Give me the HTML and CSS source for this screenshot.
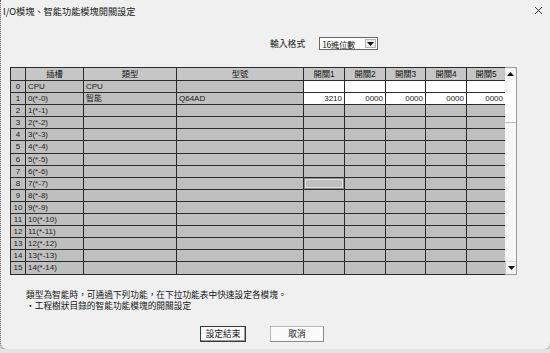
FILE: index.html
```html
<!DOCTYPE html>
<html>
<head>
  <meta charset="utf-8">
  <title>I/O模塊、智能功能模塊開關設定</title>
  <link rel="stylesheet" href="styles.css">
</head>
<body>
<div class="dialog">
  <div class="titlebar">
    <span class="title">I/O模塊、智能功能模塊開關設定</span>
    <svg class="close" width="9" height="9" viewBox="0 0 9 9"><path d="M1 1L8 8M8 1L1 8" stroke="#333" stroke-width="1"/></svg>
  </div>

  <div class="format">
    <span>輸入格式</span>
    <div class="select">
      <span class="select__text">16進位數</span>
      <span class="select__btn"><svg width="7" height="4" viewBox="0 0 7 4"><path d="M0 0H7L3.5 4Z" fill="#111"/></svg></span>
    </div>
  </div>

  <div class="table-area">
    <div class="grid">
      <div class="c h"></div><div class="c h">插槽</div><div class="c h">類型</div><div class="c h">型號</div><div class="c h">開關1</div><div class="c h">開關2</div><div class="c h">開關3</div><div class="c h">開關4</div><div class="c h">開關5</div>
      <div class="c n">0</div><div class="c">CPU</div><div class="c">CPU</div><div class="c"></div><div class="c w"></div><div class="c w"></div><div class="c w"></div><div class="c w"></div><div class="c w"></div>
      <div class="c n">1</div><div class="c">0(*-0)</div><div class="c">智能</div><div class="c">Q64AD</div><div class="c w r">3210</div><div class="c w r">0000</div><div class="c w r">0000</div><div class="c w r">0000</div><div class="c w r">0000</div>
      <div class="c n">2</div><div class="c">1(*-1)</div><div class="c"></div><div class="c"></div><div class="c"></div><div class="c"></div><div class="c"></div><div class="c"></div><div class="c"></div>
      <div class="c n">3</div><div class="c">2(*-2)</div><div class="c"></div><div class="c"></div><div class="c"></div><div class="c"></div><div class="c"></div><div class="c"></div><div class="c"></div>
      <div class="c n">4</div><div class="c">3(*-3)</div><div class="c"></div><div class="c"></div><div class="c"></div><div class="c"></div><div class="c"></div><div class="c"></div><div class="c"></div>
      <div class="c n">5</div><div class="c">4(*-4)</div><div class="c"></div><div class="c"></div><div class="c"></div><div class="c"></div><div class="c"></div><div class="c"></div><div class="c"></div>
      <div class="c n">6</div><div class="c">5(*-5)</div><div class="c"></div><div class="c"></div><div class="c"></div><div class="c"></div><div class="c"></div><div class="c"></div><div class="c"></div>
      <div class="c n">7</div><div class="c">6(*-6)</div><div class="c"></div><div class="c"></div><div class="c"></div><div class="c"></div><div class="c"></div><div class="c"></div><div class="c"></div>
      <div class="c n">8</div><div class="c">7(*-7)</div><div class="c"></div><div class="c"></div><div class="c focus"></div><div class="c"></div><div class="c"></div><div class="c"></div><div class="c"></div>
      <div class="c n">9</div><div class="c">8(*-8)</div><div class="c"></div><div class="c"></div><div class="c"></div><div class="c"></div><div class="c"></div><div class="c"></div><div class="c"></div>
      <div class="c n">10</div><div class="c">9(*-9)</div><div class="c"></div><div class="c"></div><div class="c"></div><div class="c"></div><div class="c"></div><div class="c"></div><div class="c"></div>
      <div class="c n">11</div><div class="c">10(*-10)</div><div class="c"></div><div class="c"></div><div class="c"></div><div class="c"></div><div class="c"></div><div class="c"></div><div class="c"></div>
      <div class="c n">12</div><div class="c">11(*-11)</div><div class="c"></div><div class="c"></div><div class="c"></div><div class="c"></div><div class="c"></div><div class="c"></div><div class="c"></div>
      <div class="c n">13</div><div class="c">12(*-12)</div><div class="c"></div><div class="c"></div><div class="c"></div><div class="c"></div><div class="c"></div><div class="c"></div><div class="c"></div>
      <div class="c n">14</div><div class="c">13(*-13)</div><div class="c"></div><div class="c"></div><div class="c"></div><div class="c"></div><div class="c"></div><div class="c"></div><div class="c"></div>
      <div class="c n">15</div><div class="c">14(*-14)</div><div class="c"></div><div class="c"></div><div class="c"></div><div class="c"></div><div class="c"></div><div class="c"></div><div class="c"></div>
    </div>
    <div class="scrollbar">
      <div class="scrollbar__btn"><svg width="7" height="4" viewBox="0 0 7 4"><path d="M0 4H7L3.5 0Z" fill="#111"/></svg></div>
      <div class="scrollbar__thumb"></div>
      <div class="scrollbar__track"></div>
      <div class="scrollbar__btn scrollbar__btn_down"><svg width="7" height="4" viewBox="0 0 7 4"><path d="M0 0H7L3.5 4Z" fill="#111"/></svg></div>
    </div>
  </div>

  <div class="notes">
    <p>類型為智能時，可通過下列功能，在下拉功能表中快速設定各模塊。</p>
    <p>・工程樹狀目錄的智能功能模塊的開關設定</p>
  </div>

  <div class="actions">
    <button class="btn btn_default">設定結束</button>
    <button class="btn btn_cancel">取消</button>
  </div>
</div>
</body>
</html>
```

FILE: styles.css
```css
body {
  margin: 0;
  background: #e4e4e4;
  font-family: "Liberation Sans", "Noto Sans CJK TC", sans-serif;
  color: #151515;
}

.dialog {
  width: 549px;
  height: 349px;
  background: #f0f0f0;
  border-left: 1px dotted #555;
  border-bottom-left-radius: 6px;
  border-bottom-right-radius: 6px;
  box-shadow: 0 1px 2px rgba(0, 0, 0, 0.3);
}

.titlebar {
  display: flex;
  align-items: center;
  justify-content: space-between;
  height: 21px;
  padding: 0 7px 0 2px;
}

.title {
  font-size: 9.2px;
  font-family: "Noto Sans CJK TC", sans-serif;
}

.close {
  display: block;
}

.format {
  display: flex;
  align-items: center;
  gap: 14px;
  height: 13px;
  margin-top: 16px;
  padding-left: 269px;
  font-size: 8.8px;
  font-family: "Noto Sans CJK TC", sans-serif;
}

.select {
  display: flex;
  align-items: center;
  justify-content: space-between;
  width: 55px;
  height: 11px;
  border: 1px solid #666;
  background: #fff;
  padding-left: 2px;
}

.select__text {
  font-size: 8.4px;
  letter-spacing: -0.3px;
}

.select__btn {
  display: flex;
  align-items: center;
  justify-content: center;
  width: 11px;
  height: 9px;
  margin-right: 1px;
  background: #ececec;
  border: 1px solid #b4b4b4;
  box-sizing: border-box;
}

.table-area {
  display: flex;
  margin: 17px 0 0 9px;
}

.grid {
  display: grid;
  grid-template-columns: 14px 57px 92px 126px 40px 40px 39px 40px 38px;
  grid-template-rows: 12px repeat(16, 11.1px);
  gap: 1px;
  background: #2b2b2b;
  border: 1px solid #2b2b2b;
  border-right: none;
}

.c {
  background: #bfbfbf;
  font-size: 8px;
  line-height: 11px;
  padding-left: 2px;
  white-space: nowrap;
  overflow: hidden;
  color: #222;
}

.h {
  background: #c6c6c6;
  text-align: center;
  padding: 0;
  font-size: 8.3px;
  line-height: 12px;
  color: #111;
}

.n {
  text-align: center;
  padding: 0;
}

.w {
  background: #fff;
}

.r {
  text-align: right;
  padding: 0 2px 0 0;
}

.focus {
  box-shadow: inset 0 0 0 1px #8c8c8c, inset 0 0 0 2px #e2e2e2;
}

.scrollbar {
  display: flex;
  flex-direction: column;
  width: 11px;
  background: #f7f7f7;
  border: 1px solid #9a9a9a;
  border-left: none;
}

.scrollbar__btn {
  display: flex;
  align-items: center;
  justify-content: center;
  height: 12px;
  background: #f4f4f4;
}

.scrollbar__btn_down {
  border-left: 1px solid #c8c8c8;
  border-top: 1px solid #d8d8d8;
}

.scrollbar__thumb {
  height: 42px;
  background: #fff;
  border-bottom: 1px solid #bdbdbd;
}

.scrollbar__track {
  flex: 1;
}

.notes {
  margin: 14px 0 0 25px;
  font-size: 8.7px;
  line-height: 11.5px;
  font-family: "Noto Sans CJK TC", sans-serif;
}

.notes p {
  margin: 0;
}

.actions {
  display: flex;
  gap: 24px;
  margin-top: 14px;
  padding-left: 199px;
}

.btn {
  height: 16px;
  padding: 0;
  font-family: "Noto Sans CJK TC", sans-serif;
  font-size: 8.7px;
  color: #151515;
  background: #fbfbfb;
  border: 1px solid #b9b9b9;
  border-right-color: #8a8a8a;
  border-bottom-color: #8a8a8a;
}

.btn_default {
  width: 46px;
  border: 1px solid #3a3a3a;
  box-shadow: inset -1px -1px 0 #9a9a9a;
}

.btn_cancel {
  width: 54px;
}
```
